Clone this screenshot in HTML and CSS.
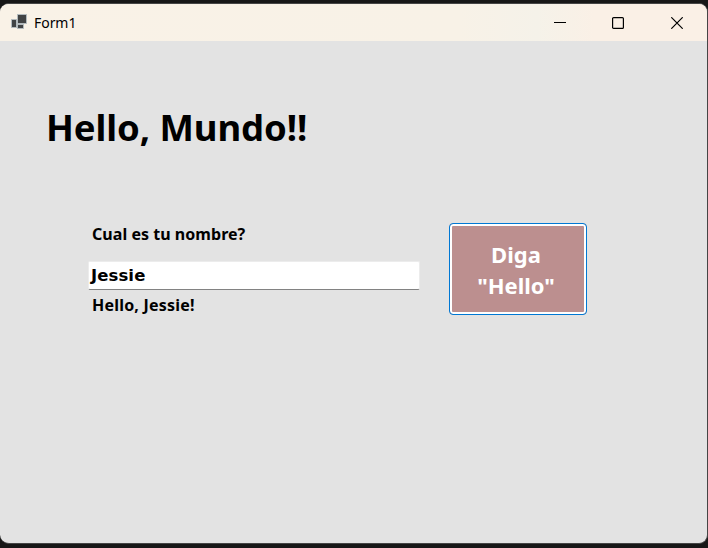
FILE: index.html
```html
<!DOCTYPE html>
<html lang="es">
<head>
<meta charset="utf-8">
<title>Form1</title>
<link rel="stylesheet" href="styles.css">
</head>
<body>
<main class="window">
  <header class="titlebar">
    <svg class="app-icon" width="18" height="18" viewBox="0 0 18 18">
      <g fill="#414344" stroke="#b3babd" stroke-width="1">
        <path d="M1.5 5.5h5v8h-5z"/><path d="M7.5.5h9v9h-9z"/><path d="M7.5 10.5h6v4h-6z"/>
      </g>
    </svg>
    <span class="caption">Form1</span>
    <nav class="controls">
      <svg width="12" height="12" viewBox="0 0 12 12"><path d="M0 5.5h12"/></svg>
      <svg width="12" height="12" viewBox="0 0 12 12"><rect x=".6" y=".6" width="10.8" height="10.8" rx="1"/></svg>
      <svg width="12" height="12" viewBox="0 0 12 12"><path d="M.3.3l11.4 11.4M11.7.3L.3 11.7"/></svg>
    </nav>
  </header>
  <section class="form">
    <h1 class="heading">Hello, Mundo!!</h1>
    <div class="row">
      <div class="fields">
        <div class="label question">Cual es tu nombre?</div>
        <div class="textbox">Jessie</div>
        <div class="label greeting">Hello, Jessie!</div>
      </div>
      <button class="action"><span class="diga">Diga</span><span class="hello">"Hello"</span></button>
    </div>
  </section>
</main>
</body>
</html>
```
FILE: styles.css
```css
* { box-sizing: border-box; }
body {
  margin: 0;
  height: 548px;
  padding: 3px 0 4px;
  background: #171717;
  font-family: "Noto Sans", "Open Sans", sans-serif;
  overflow: hidden;
}
.window {
  width: 708px;
  height: 541px;
  border: 1px solid #454545;
  border-left: 0;
  border-radius: 9px;
  overflow: hidden;
  background: #e3e3e3;
  color: #000;
}
.titlebar {
  display: flex;
  align-items: center;
  height: 37px;
  padding: 0 24px 0 10px;
  background: linear-gradient(90deg, #f9f2e7, #f8f2e7 65%, #f5f2e9 76%, #faf0e6 84%);
}
.app-icon { margin-top: 1px; }
.caption { margin-left: 6px; font-size: 14px; line-height: 20px; letter-spacing: -.05px; }
.controls { display: flex; gap: 47px; margin-left: auto; }
.controls svg { fill: none; stroke: #000; stroke-width: 1.2; }
.controls svg:first-child { margin-right: -1px; }
.form { padding: 61px 0 0 44px; }
.heading { margin: 0; height: 50px; padding-left: 2px; font-size: 36.5px; line-height: 50px; font-weight: 700; letter-spacing: -.1px; white-space: nowrap; }
.row { display: flex; gap: 29px; margin: 71px 0 0 44px; }
.fields { width: 332px; }
.label { padding-left: 4px; font-size: 16px; line-height: 22px; font-weight: 700; white-space: nowrap; }
.greeting { letter-spacing: .2px; }
.question { letter-spacing: .04px; }
.textbox {
  height: 29px;
  margin: 16px 0 4px;
  padding: 0 2px;
  border: 1px solid #ececec;
  border-bottom-color: #828282;
  border-radius: 2px;
  background: #fff;
  font: 700 16.5px/27px "DejaVu Sans", sans-serif;
  letter-spacing: .1px;
}
.action {
  display: flex;
  flex-direction: column;
  justify-content: center;
  align-items: center;
  width: 138px;
  height: 92px;
  padding: 1px 4px 0 0;
  border: 1px solid #0078d4;
  border-radius: 4px;
  box-shadow: inset 0 0 0 2px #fff;
  background: #bc8f8f;
  color: #fff;
  font: 700 22px/31px "Noto Sans", sans-serif;
}
```
